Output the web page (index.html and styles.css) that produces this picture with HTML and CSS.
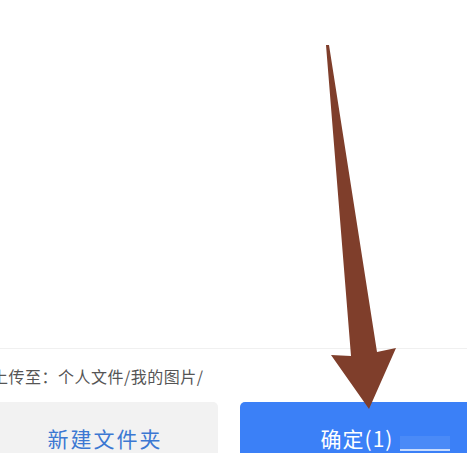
FILE: index.html
```html
<!DOCTYPE html>
<html>
<head>
    <meta charset="utf-8">
    <title>选择上传位置</title>
    <link rel="stylesheet" href="styles.css">
</head>
<body>

    <div class="page">
        <div class="list"></div>

        <div class="footer">
            <div class="path">上传至：个人文件/我的图片/</div>
            <div class="actions">
                <div class="btn btn-light">新建文件夹</div>
                <div class="btn btn-primary">
                    确定(1)
                    <span class="glare"></span>
                </div>
            </div>
        </div>

        <svg class="arrow" width="467" height="453" viewBox="0 0 467 453">
            <polygon points="326,45 329,45 377,352 396,348 369,409 331,355 351,356" fill="#7f3e2b" />
        </svg>
    </div>

</body>
</html>
```

FILE: styles.css
```css
html, body {
    height: 100%; width: 100%;
}
body {
    margin: 0;
    background: #FFF;
    overflow: hidden;
    font-family: "Noto Sans CJK SC", "Noto Sans", sans-serif;
}
.page {
    position: relative;
    height: 100%;
}
.list {
    height: 348px;
    border-bottom: 1px solid #F0F0F0;
}
.footer {
    margin-left: -8px;
    padding-top: 17px;
}
.path {
    font-size: 16px;
    line-height: 20px;
    letter-spacing: 0.5px;
    color: #555;
    white-space: nowrap;
}
.actions {
    display: flex;
    gap: 22px;
    margin-top: 16px;
}
.btn {
    position: relative;
    flex: 0 0 226px;
    height: 72px;
    border-radius: 5px;
    font-size: 21px;
    line-height: 72px;
    text-align: center;
    white-space: nowrap;
}
.btn-light {
    background: #F2F2F2;
    color: #3C78D2;
    letter-spacing: 2px;
}
.btn-primary {
    flex-basis: 234px;
    background: #3B80F7;
    color: #FFF;
    letter-spacing: 1px;
}
.glare {
    position: absolute;
    left: 160px; top: 34px;
    width: 50px; height: 13px;
    background: rgba(255,255,255,.08);
    border-bottom: 2px solid rgba(255,255,255,.7);
}
.arrow {
    position: absolute;
    top: 0; left: 0;
    pointer-events: none;
}
```
